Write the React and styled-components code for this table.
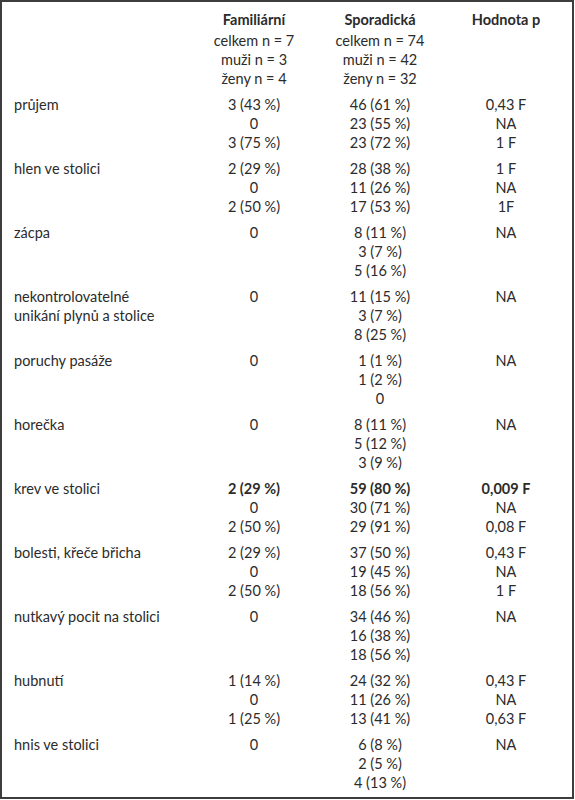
import styled, { createGlobalStyle } from "styled-components";

const GlobalStyle = createGlobalStyle`
  html, body {
    margin: 0;
    padding: 0;
    background: #ffffff;
  }
  body {
    font-family: Lato, "Open Sans", "Noto Sans", sans-serif;
    color: #2b2b2b;
  }
`;

// 표 전체 틀
const Frame = styled.div`
  box-sizing: border-box;
  width: 574px;
  height: 799px;
  border: 2px solid #3d3d3d;
  padding-bottom: 2px;
  background: #fff;
`;

// 한 행 (헤더 포함)
const Row = styled.div`
  display: grid;
  grid-template-columns: 189px 126px 126px 126px;
  padding: ${(p) => (p.$head ? "8px 0 3px" : "4px 0 3px")};
`;

const Cell = styled.div`
  display: flex;
  flex-direction: column;
  align-items: ${(p) => (p.$label ? "flex-start" : "center")};
  padding-left: ${(p) => (p.$label ? "12px" : "0")};
  font-size: 14.5px;
  line-height: 19px;
  white-space: nowrap;
`;

const Line = styled.span`
  font-weight: ${(p) => (p.$bold ? 700 : 400)};
`;

const HeadTitle = styled.span`
  font-weight: 700;
  margin-bottom: 2px;
`;

const head = [
  { title: "Familiární", lines: ["celkem n = 7", "muži n = 3", "ženy n = 4"] },
  { title: "Sporadická", lines: ["celkem n = 74", "muži n = 42", "ženy n = 32"] },
  { title: "Hodnota p", lines: [] },
];

const rows = [
  {
    label: ["průjem"],
    fam: ["3 (43 %)", "0", "3 (75 %)"],
    spo: ["46 (61 %)", "23 (55 %)", "23 (72 %)"],
    p: ["0,43 F", "NA", "1 F"],
  },
  {
    label: ["hlen ve stolici"],
    fam: ["2 (29 %)", "0", "2 (50 %)"],
    spo: ["28 (38 %)", "11 (26 %)", "17 (53 %)"],
    p: ["1 F", "NA", "1F"],
  },
  {
    label: ["zácpa"],
    fam: ["0"],
    spo: ["8 (11 %)", "3 (7 %)", "5 (16 %)"],
    p: ["NA"],
  },
  {
    label: ["nekontrolovatelné", "unikání plynů a stolice"],
    fam: ["0"],
    spo: ["11 (15 %)", "3 (7 %)", "8 (25 %)"],
    p: ["NA"],
  },
  {
    label: ["poruchy pasáže"],
    fam: ["0"],
    spo: ["1 (1 %)", "1 (2 %)", "0"],
    p: ["NA"],
  },
  {
    label: ["horečka"],
    fam: ["0"],
    spo: ["8 (11 %)", "5 (12 %)", "3 (9 %)"],
    p: ["NA"],
  },
  {
    label: ["krev ve stolici"],
    fam: ["2 (29 %)", "0", "2 (50 %)"],
    spo: ["59 (80 %)", "30 (71 %)", "29 (91 %)"],
    p: ["0,009 F", "NA", "0,08 F"],
    boldFirst: true,
  },
  {
    label: ["bolesti, křeče břicha"],
    fam: ["2 (29 %)", "0", "2 (50 %)"],
    spo: ["37 (50 %)", "19 (45 %)", "18 (56 %)"],
    p: ["0,43 F", "NA", "1 F"],
  },
  {
    label: ["nutkavý pocit na stolici"],
    fam: ["0"],
    spo: ["34 (46 %)", "16 (38 %)", "18 (56 %)"],
    p: ["NA"],
  },
  {
    label: ["hubnutí"],
    fam: ["1 (14 %)", "0", "1 (25 %)"],
    spo: ["24 (32 %)", "11 (26 %)", "13 (41 %)"],
    p: ["0,43 F", "NA", "0,63 F"],
  },
  {
    label: ["hnis ve stolici"],
    fam: ["0"],
    spo: ["6 (8 %)", "2 (5 %)", "4 (13 %)"],
    p: ["NA"],
  },
];

const Values = ({ items, bold }) =>
  items.map((v, i) => (
    <Line key={i} $bold={bold && i === 0}>
      {v}
    </Line>
  ));

export default function App() {
  return (
    <>
      <GlobalStyle />
      <Frame>
        <Row $head>
          <Cell $label />
          {head.map((h) => (
            <Cell key={h.title}>
              <HeadTitle>{h.title}</HeadTitle>
              {h.lines.map((l) => (
                <Line key={l}>{l}</Line>
              ))}
            </Cell>
          ))}
        </Row>
        {rows.map((r) => (
          <Row key={r.label[0]}>
            <Cell $label>
              <Values items={r.label} />
            </Cell>
            <Cell>
              <Values items={r.fam} bold={r.boldFirst} />
            </Cell>
            <Cell>
              <Values items={r.spo} bold={r.boldFirst} />
            </Cell>
            <Cell>
              <Values items={r.p} bold={r.boldFirst} />
            </Cell>
          </Row>
        ))}
      </Frame>
    </>
  );
}
